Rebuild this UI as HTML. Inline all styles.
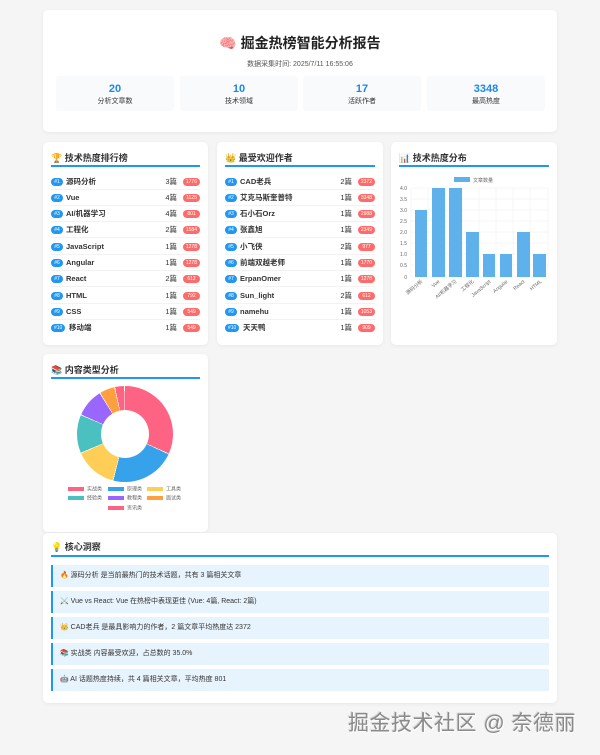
<!DOCTYPE html><html><head><meta charset="utf-8"><style>
*{margin:0;padding:0;box-sizing:border-box}
body{width:600px;height:755px;background:#f5f5f5;font-family:"Liberation Sans","Noto Sans CJK SC",sans-serif;position:relative;overflow:hidden;color:#333}
.card{position:absolute;background:#fff;border-radius:5px;box-shadow:0 1px 4px rgba(0,0,0,.06)}
.ttl{position:absolute;left:8px;top:9px;font-size:9px;font-weight:bold;color:#333}
.ul{position:absolute;left:8px;right:8px;top:23px;height:1.5px;background:#2196f3}
.stat{position:absolute;top:66px;height:35px;background:#f8fafc;border-radius:3px;text-align:center}
.stat b{display:block;color:#1e88e5;font-size:11px;margin-top:7px}
.stat span{display:block;font-size:7px;color:#333;margin-top:1px}
.row{position:absolute;left:8px;right:8px;height:16px;font-size:7.5px;border-bottom:.5px solid #f2f2f2}
.bd{position:absolute;left:0;top:4px;height:8px;padding:0 3px;min-width:12px;border-radius:4px;background:#2196f3;color:#fff;font-size:5px;line-height:8px;text-align:center}
.nm{position:absolute;left:15px;top:3px;font-weight:bold;line-height:10px}
.ct{position:absolute;right:23px;top:3px;line-height:10px}
.hp{position:absolute;right:0;top:4px;height:8px;min-width:17px;padding:0 3px;border-radius:4px;background:#ff6b6b;color:#fff;font-size:5px;line-height:8px;text-align:center}
.ins{position:absolute;left:8px;right:8px;height:22px;background:#e8f4fd;border-left:2px solid #2196f3;font-size:7px;line-height:22px;padding-left:7px;color:#333}
.lg{position:absolute;font-size:5px;color:#666;line-height:5px}
.lg i{display:inline-block;width:16px;height:4px;vertical-align:middle;margin-right:3px}
</style></head><body>
<div class="card" style="left:43px;top:10px;width:514px;height:122px">
<div style="position:absolute;top:23px;width:100%;text-align:center;font-size:14px;font-weight:bold;color:#222">🧠 掘金热榜智能分析报告</div>
<div style="position:absolute;top:49px;width:100%;text-align:center;font-size:7px;color:#555">数据采集时间: 2025/7/11 16:55:06</div>
<div class="stat" style="left:13px;width:118px"><b>20</b><span>分析文章数</span></div>
<div class="stat" style="left:137px;width:118px"><b>10</b><span>技术领域</span></div>
<div class="stat" style="left:260px;width:118px"><b>17</b><span>活跃作者</span></div>
<div class="stat" style="left:384px;width:118px"><b>3348</b><span>最高热度</span></div>
</div>

<div class="card" style="left:43px;top:142px;width:165px;height:203px">
<div class="ttl">🏆 技术热度排行榜</div><div class="ul"></div>
<div class="row" style="top:32px"><span class="bd">#1</span><span class="nm">源码分析</span><span class="ct">3篇</span><span class="hp">1776</span></div>
<div class="row" style="top:48px"><span class="bd">#2</span><span class="nm">Vue</span><span class="ct">4篇</span><span class="hp">1125</span></div>
<div class="row" style="top:64px"><span class="bd">#3</span><span class="nm">AI/机器学习</span><span class="ct">4篇</span><span class="hp">801</span></div>
<div class="row" style="top:80px"><span class="bd">#4</span><span class="nm">工程化</span><span class="ct">2篇</span><span class="hp">1584</span></div>
<div class="row" style="top:97px"><span class="bd">#5</span><span class="nm">JavaScript</span><span class="ct">1篇</span><span class="hp">1278</span></div>
<div class="row" style="top:113px"><span class="bd">#6</span><span class="nm">Angular</span><span class="ct">1篇</span><span class="hp">1278</span></div>
<div class="row" style="top:129px"><span class="bd">#7</span><span class="nm">React</span><span class="ct">2篇</span><span class="hp">612</span></div>
<div class="row" style="top:146px"><span class="bd">#8</span><span class="nm">HTML</span><span class="ct">1篇</span><span class="hp">792</span></div>
<div class="row" style="top:162px"><span class="bd">#9</span><span class="nm">CSS</span><span class="ct">1篇</span><span class="hp">549</span></div>
<div class="row" style="top:178px;border:0"><span class="bd">#10</span><span class="nm" style="left:18px">移动端</span><span class="ct">1篇</span><span class="hp">549</span></div>
</div>

<div class="card" style="left:217px;top:142px;width:166px;height:203px">
<div class="ttl">👑 最受欢迎作者</div><div class="ul"></div>
<div class="row" style="top:32px"><span class="bd">#1</span><span class="nm">CAD老兵</span><span class="ct">2篇</span><span class="hp">2372</span></div>
<div class="row" style="top:48px"><span class="bd">#2</span><span class="nm">艾克马斯奎普特</span><span class="ct">1篇</span><span class="hp">3348</span></div>
<div class="row" style="top:64px"><span class="bd">#3</span><span class="nm">石小石Orz</span><span class="ct">1篇</span><span class="hp">2988</span></div>
<div class="row" style="top:80px"><span class="bd">#4</span><span class="nm">张鑫旭</span><span class="ct">1篇</span><span class="hp">2349</span></div>
<div class="row" style="top:97px"><span class="bd">#5</span><span class="nm">小飞侠</span><span class="ct">2篇</span><span class="hp">977</span></div>
<div class="row" style="top:113px"><span class="bd">#6</span><span class="nm">前端双越老师</span><span class="ct">1篇</span><span class="hp">1770</span></div>
<div class="row" style="top:129px"><span class="bd">#7</span><span class="nm">ErpanOmer</span><span class="ct">1篇</span><span class="hp">1278</span></div>
<div class="row" style="top:146px"><span class="bd">#8</span><span class="nm">Sun_light</span><span class="ct">2篇</span><span class="hp">612</span></div>
<div class="row" style="top:162px"><span class="bd">#9</span><span class="nm">namehu</span><span class="ct">1篇</span><span class="hp">1053</span></div>
<div class="row" style="top:178px;border:0"><span class="bd">#10</span><span class="nm" style="left:18px">天天鸭</span><span class="ct">1篇</span><span class="hp">909</span></div>
</div>

<div class="card" style="left:391px;top:142px;width:166px;height:203px">
<div class="ttl">📊 技术热度分布</div><div class="ul"></div>
<svg width="166" height="170" style="position:absolute;left:0;top:30px" font-family="Liberation Sans,Noto Sans CJK SC,sans-serif">
<rect x="63" y="5" width="16" height="5" fill="#5eb1ea"/><text x="82" y="10" font-size="5" fill="#666">文章数量</text>
<g stroke="#eee" stroke-width=".5">
<line x1="20" y1="16" x2="157" y2="16"/><line x1="20" y1="27" x2="157" y2="27"/><line x1="20" y1="38" x2="157" y2="38"/><line x1="20" y1="49" x2="157" y2="49"/><line x1="20" y1="60" x2="157" y2="60"/><line x1="20" y1="71" x2="157" y2="71"/><line x1="20" y1="82" x2="157" y2="82"/><line x1="20" y1="93" x2="157" y2="93"/><line x1="20" y1="105" x2="157" y2="105"/>
<line x1="20" y1="16" x2="20" y2="105"/><line x1="37" y1="16" x2="37" y2="105"/><line x1="54" y1="16" x2="54" y2="105"/><line x1="71" y1="16" x2="71" y2="105"/><line x1="88" y1="16" x2="88" y2="105"/><line x1="105" y1="16" x2="105" y2="105"/><line x1="122" y1="16" x2="122" y2="105"/><line x1="139" y1="16" x2="139" y2="105"/><line x1="157" y1="16" x2="157" y2="105"/></g>
<g font-size="5" fill="#666" text-anchor="end"><text x="16" y="18">4.0</text><text x="16" y="29">3.5</text><text x="16" y="40">3.0</text><text x="16" y="51">2.5</text><text x="16" y="62">2.0</text><text x="16" y="73">1.5</text><text x="16" y="84">1.0</text><text x="16" y="95">0.5</text><text x="16" y="107">0</text></g>
<g fill="#5eb1ea"><rect x="24" y="38" width="12" height="67"/><rect x="41" y="16" width="13" height="89"/><rect x="58" y="16" width="13" height="89"/><rect x="75" y="60" width="13" height="45"/><rect x="92" y="82" width="12" height="23"/><rect x="109" y="82" width="12" height="23"/><rect x="126" y="60" width="13" height="45"/><rect x="142" y="82" width="13" height="23"/></g>
<g font-size="5" fill="#666" text-anchor="end">
<text transform="translate(32,110) rotate(-40)">源码分析</text><text transform="translate(49,110) rotate(-40)">Vue</text><text transform="translate(66,110) rotate(-40)">AI/机器学习</text><text transform="translate(83,110) rotate(-40)">工程化</text><text transform="translate(100,110) rotate(-40)">JavaScript</text><text transform="translate(117,110) rotate(-40)">Angular</text><text transform="translate(134,110) rotate(-40)">React</text><text transform="translate(151,110) rotate(-40)">HTML</text></g>
</svg>
</div>

<div class="card" style="left:43px;top:354px;width:165px;height:178px">
<div class="ttl" style="top:9px">📚 内容类型分析</div><div class="ul" style="top:23px"></div>
<div style="position:absolute;left:34px;top:32px;width:96px;height:96px;border-radius:50%;background:conic-gradient(#ff6384 0 114deg,#fff 114deg 115deg,#36a2eb 115deg 194deg,#fff 194deg 195deg,#ffce56 195deg 246deg,#fff 246deg 247deg,#4bc0c0 247deg 293deg,#fff 293deg 294deg,#9966ff 294deg 328deg,#fff 328deg 329deg,#ff9f40 329deg 347deg,#fff 347deg 348deg,#ff6384 348deg 359deg,#fff 359deg)"></div>
<div style="position:absolute;left:58px;top:56px;width:48px;height:48px;border-radius:50%;background:#fff"></div>
<div class="lg" style="left:25px;top:133px"><i style="background:#ff6384"></i>实战类</div>
<div class="lg" style="left:65px;top:133px"><i style="background:#36a2eb"></i>原理类</div>
<div class="lg" style="left:104px;top:133px"><i style="background:#ffce56"></i>工具类</div>
<div class="lg" style="left:25px;top:142px"><i style="background:#4bc0c0"></i>经验类</div>
<div class="lg" style="left:65px;top:142px"><i style="background:#9966ff"></i>教程类</div>
<div class="lg" style="left:104px;top:142px"><i style="background:#ff9f40"></i>面试类</div>
<div class="lg" style="left:65px;top:152px"><i style="background:#ff6384"></i>资讯类</div>
</div>

<div class="card" style="left:43px;top:533px;width:514px;height:170px">
<div class="ttl" style="top:7px">💡 核心洞察</div><div class="ul" style="top:22px"></div>
<div class="ins" style="top:32px">🔥 源码分析 是当前最热门的技术话题，共有 3 篇相关文章</div>
<div class="ins" style="top:58px">⚔️ Vue vs React: Vue 在热榜中表现更佳 (Vue: 4篇, React: 2篇)</div>
<div class="ins" style="top:84px">👑 CAD老兵 是最具影响力的作者，2 篇文章平均热度达 2372</div>
<div class="ins" style="top:110px">📚 实战类 内容最受欢迎，占总数的 35.0%</div>
<div class="ins" style="top:136px">🤖 AI 话题热度持续，共 4 篇相关文章，平均热度 801</div>
</div>

<div style="position:absolute;left:348px;top:707px;font-size:21px;letter-spacing:.5px;color:#8a8a8a;text-shadow:1px 1px 0 #fff,-1px -1px 0 #ddd;white-space:nowrap">掘金技术社区 @ 奈德丽</div>
</body></html>
